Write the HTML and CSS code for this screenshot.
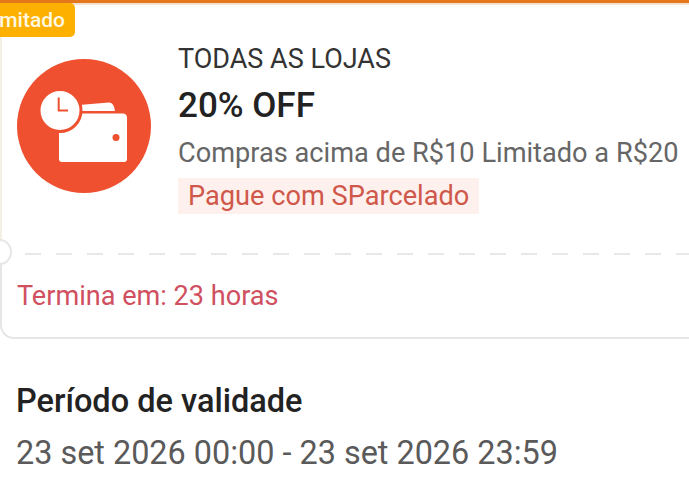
FILE: index.html
```html
<!DOCTYPE html>
<html>

    <head>
        <meta charset="utf-8">
        <title>Voucher</title>
        <link rel="stylesheet" href="styles.css">
    </head>

    <body>
        <div class="top-bar"></div>

        <div class="voucher">
            <span class="badge">Limitado</span>

            <div class="voucher-main">
                <svg class="voucher-icon" viewBox="0 0 134 134" width="134" height="134">
                    <circle cx="67" cy="67" r="67" fill="#ee5030"/>
                    <!-- wallet flap -->
                    <path d="M62 46 L92 43.500 Q97 43.500 98 52 L62 52 Z" fill="#fff"/>
                    <!-- wallet body -->
                    <path d="M44 54.500 H106 Q110 54.500 110 59 V100 Q110 103 107 103 H45 Q42 103 42 100 V56 Z" fill="#fff"/>
                    <circle cx="99" cy="78.500" r="3.500" fill="#ee5030"/>
                    <!-- clock -->
                    <circle cx="43" cy="51.500" r="21" fill="#fff" stroke="#ee5030" stroke-width="3"/>
                    <path d="M41.700 38.500 V51.500 H51" fill="none" stroke="#ee5030" stroke-width="2"/>
                </svg>
                <div class="voucher-text">
                    <div class="voucher-scope">TODAS AS LOJAS</div>
                    <div class="voucher-discount">20% OFF</div>
                    <div class="voucher-terms">Compras acima de R$10 Limitado a R$20</div>
                    <span class="voucher-tag">Pague com SParcelado</span>
                </div>
            </div>

            <div class="voucher-divider">
                <span class="notch"></span>
            </div>

            <div class="voucher-expiry">Termina em: 23 horas</div>
        </div>

        <div class="validity">
            <h2 class="validity-title">Período de validade</h2>
            <div class="validity-dates">23 set 2026 00:00 - 23 set 2026 23:59</div>
        </div>
    </body>

</html>
```

FILE: styles.css
```css
* {
    font-family: 'Roboto', sans-serif;
    box-sizing: border-box;
}

body {
    background-color: white;
    height: 100vh;
    margin: 0px;
    overflow: hidden;
}

.top-bar {
    height: 6px;
    background-color: #e4761c;
    border-bottom: 3px solid #f5e0cf;
}

.voucher {
    position: relative;
    width: 720px;
    height: 334px;
    margin-top: -1px;
    background-color: white;
    border: 2px solid #e6e6e6;
    border-top: none;
    border-right: none;
    border-radius: 0 0 0 14px;
}

.badge {
    position: absolute;
    top: -2px;
    right: 645px;
    padding: 0 10px 0 6px;
    height: 34px;
    line-height: 34px;
    font-size: 21px;
    font-weight: 500;
    color: #fff8e0;
    white-space: nowrap;
    background-color: #fdb000;
    border-radius: 0 5px 5px 0;
}

.voucher-main {
    display: flex;
    align-items: flex-start;
    gap: 27px;
    height: 248px;
    margin-left: -2px;
    padding: 54px 0 0 15px;
    border-left: 2px solid #f3f0e4;
}

.voucher-icon {
    flex-shrink: 0;
}

.voucher-text {
    margin-top: -17px;
}

.voucher-scope {
    font-size: 27px;
    line-height: 34px;
    color: #333;
}

.voucher-discount {
    margin-top: 11px;
    font-size: 35px;
    font-weight: 500;
    line-height: 38px;
    color: #222;
}

.voucher-terms {
    margin-top: 11px;
    font-size: 27.200px;
    line-height: 34px;
    color: #666;
    white-space: nowrap;
}

.voucher-tag {
    display: inline-block;
    margin-top: 8px;
    padding: 0 10px;
    font-size: 27.200px;
    line-height: 36px;
    color: #d0584a;
    background-color: #fdf0ed;
}

.voucher-divider {
    position: relative;
    height: 2px;
    margin-left: 23px;
    background-image: repeating-linear-gradient(to right, #e8e8e8 0px, #e8e8e8 16px, transparent 16px, transparent 31px);
}

.notch {
    position: absolute;
    left: -37px;
    top: -14px;
    width: 24px;
    height: 26px;
    background-color: white;
    border: 2px solid #e6e6e6;
    border-radius: 50%;
}

.voucher-expiry {
    padding: 24px 0 0 15px;
    font-size: 27.100px;
    line-height: 34px;
    color: #d0505f;
}

.validity {
    padding: 43px 16px 0;
}

.validity-title {
    margin: 0px;
    font-size: 32.500px;
    font-weight: 500;
    line-height: 38px;
    color: #222;
}

.validity-dates {
    margin-top: 14px;
    font-size: 32.400px;
    line-height: 38px;
    color: #5a5a5a;
    white-space: nowrap;
}
```
